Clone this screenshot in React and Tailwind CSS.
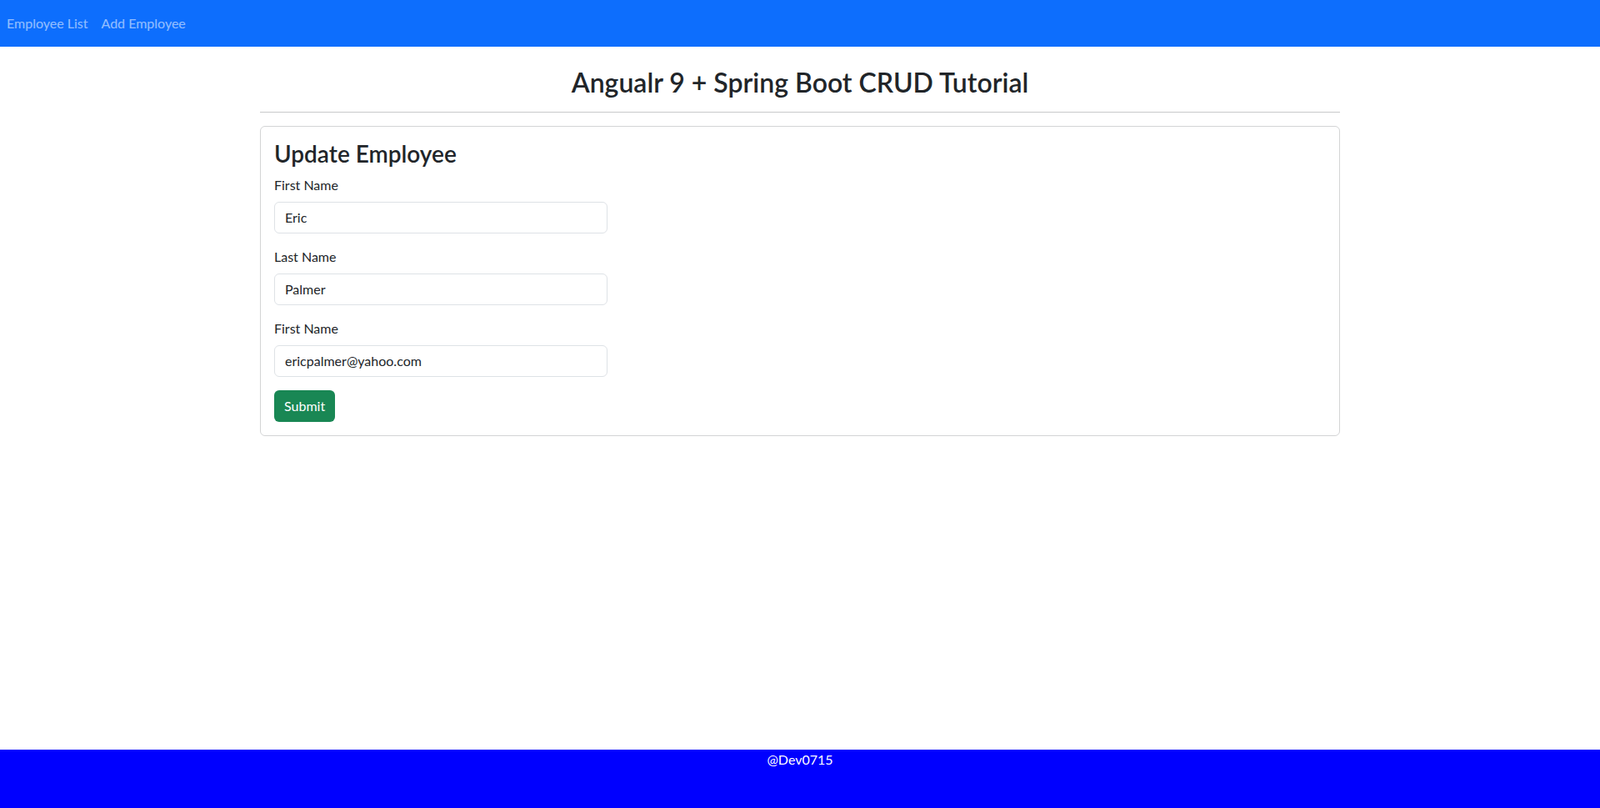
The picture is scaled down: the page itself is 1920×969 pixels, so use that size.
import React from 'react';

const fields = [
  { label: 'First Name', value: 'Eric' },
  { label: 'Last Name', value: 'Palmer' },
  { label: 'First Name', value: 'ericpalmer@yahoo.com' },
];

const App = () => {
  return (
    <div
      className="h-screen flex flex-col bg-white text-[#212529] overflow-hidden"
      style={{ fontFamily: 'Lato, "Noto Sans", sans-serif' }}
    >
      {/* Navbar */}
      <nav className="h-14 shrink-0 bg-[#0d6efd] flex items-center">
        <ul className="flex">
          <li>
            <a className="block px-2 py-2 text-base leading-6 text-white/55 cursor-pointer">Employee List</a>
          </li>
          <li>
            <a className="block px-2 py-2 text-base leading-6 text-white/55 cursor-pointer">Add Employee</a>
          </li>
        </ul>
      </nav>

      {/* Main */}
      <main className="flex-1">
        <div className="max-w-[1320px] mx-auto px-3">
          <h2 className="mt-6 mb-2 text-[32px] leading-[1.2] font-semibold text-center">
            Angualr 9 + Spring Boot CRUD Tutorial
          </h2>
          <hr className="my-4 border-t border-[#c8c9ca]" />

          <div className="border border-[#d3d4d5] rounded-md p-4">
            <h3 className="mb-2 text-[28px] leading-[1.2] font-semibold">Update Employee</h3>
            <form onSubmit={(e) => e.preventDefault()}>
              {fields.map((f, i) => (
                <div key={i} className="mb-4">
                  <label className="block mb-2 text-base leading-6">{f.label}</label>
                  <input
                    type="text"
                    defaultValue={f.value}
                    className="block w-[400px] h-[38px] px-3 py-1.5 text-base leading-6 text-[#212529] border border-[#dee2e6] rounded-md outline-none"
                  />
                </div>
              ))}
              <button
                type="submit"
                className="h-[38px] px-3 py-1.5 text-base leading-6 text-white bg-[#198754] rounded-md"
              >
                Submit
              </button>
            </form>
          </div>
        </div>
      </main>

      {/* Footer */}
      <footer className="h-[70px] shrink-0 bg-[#0000ff] text-white text-center text-base leading-6">
        @Dev0715
      </footer>
    </div>
  );
};

export default App;
